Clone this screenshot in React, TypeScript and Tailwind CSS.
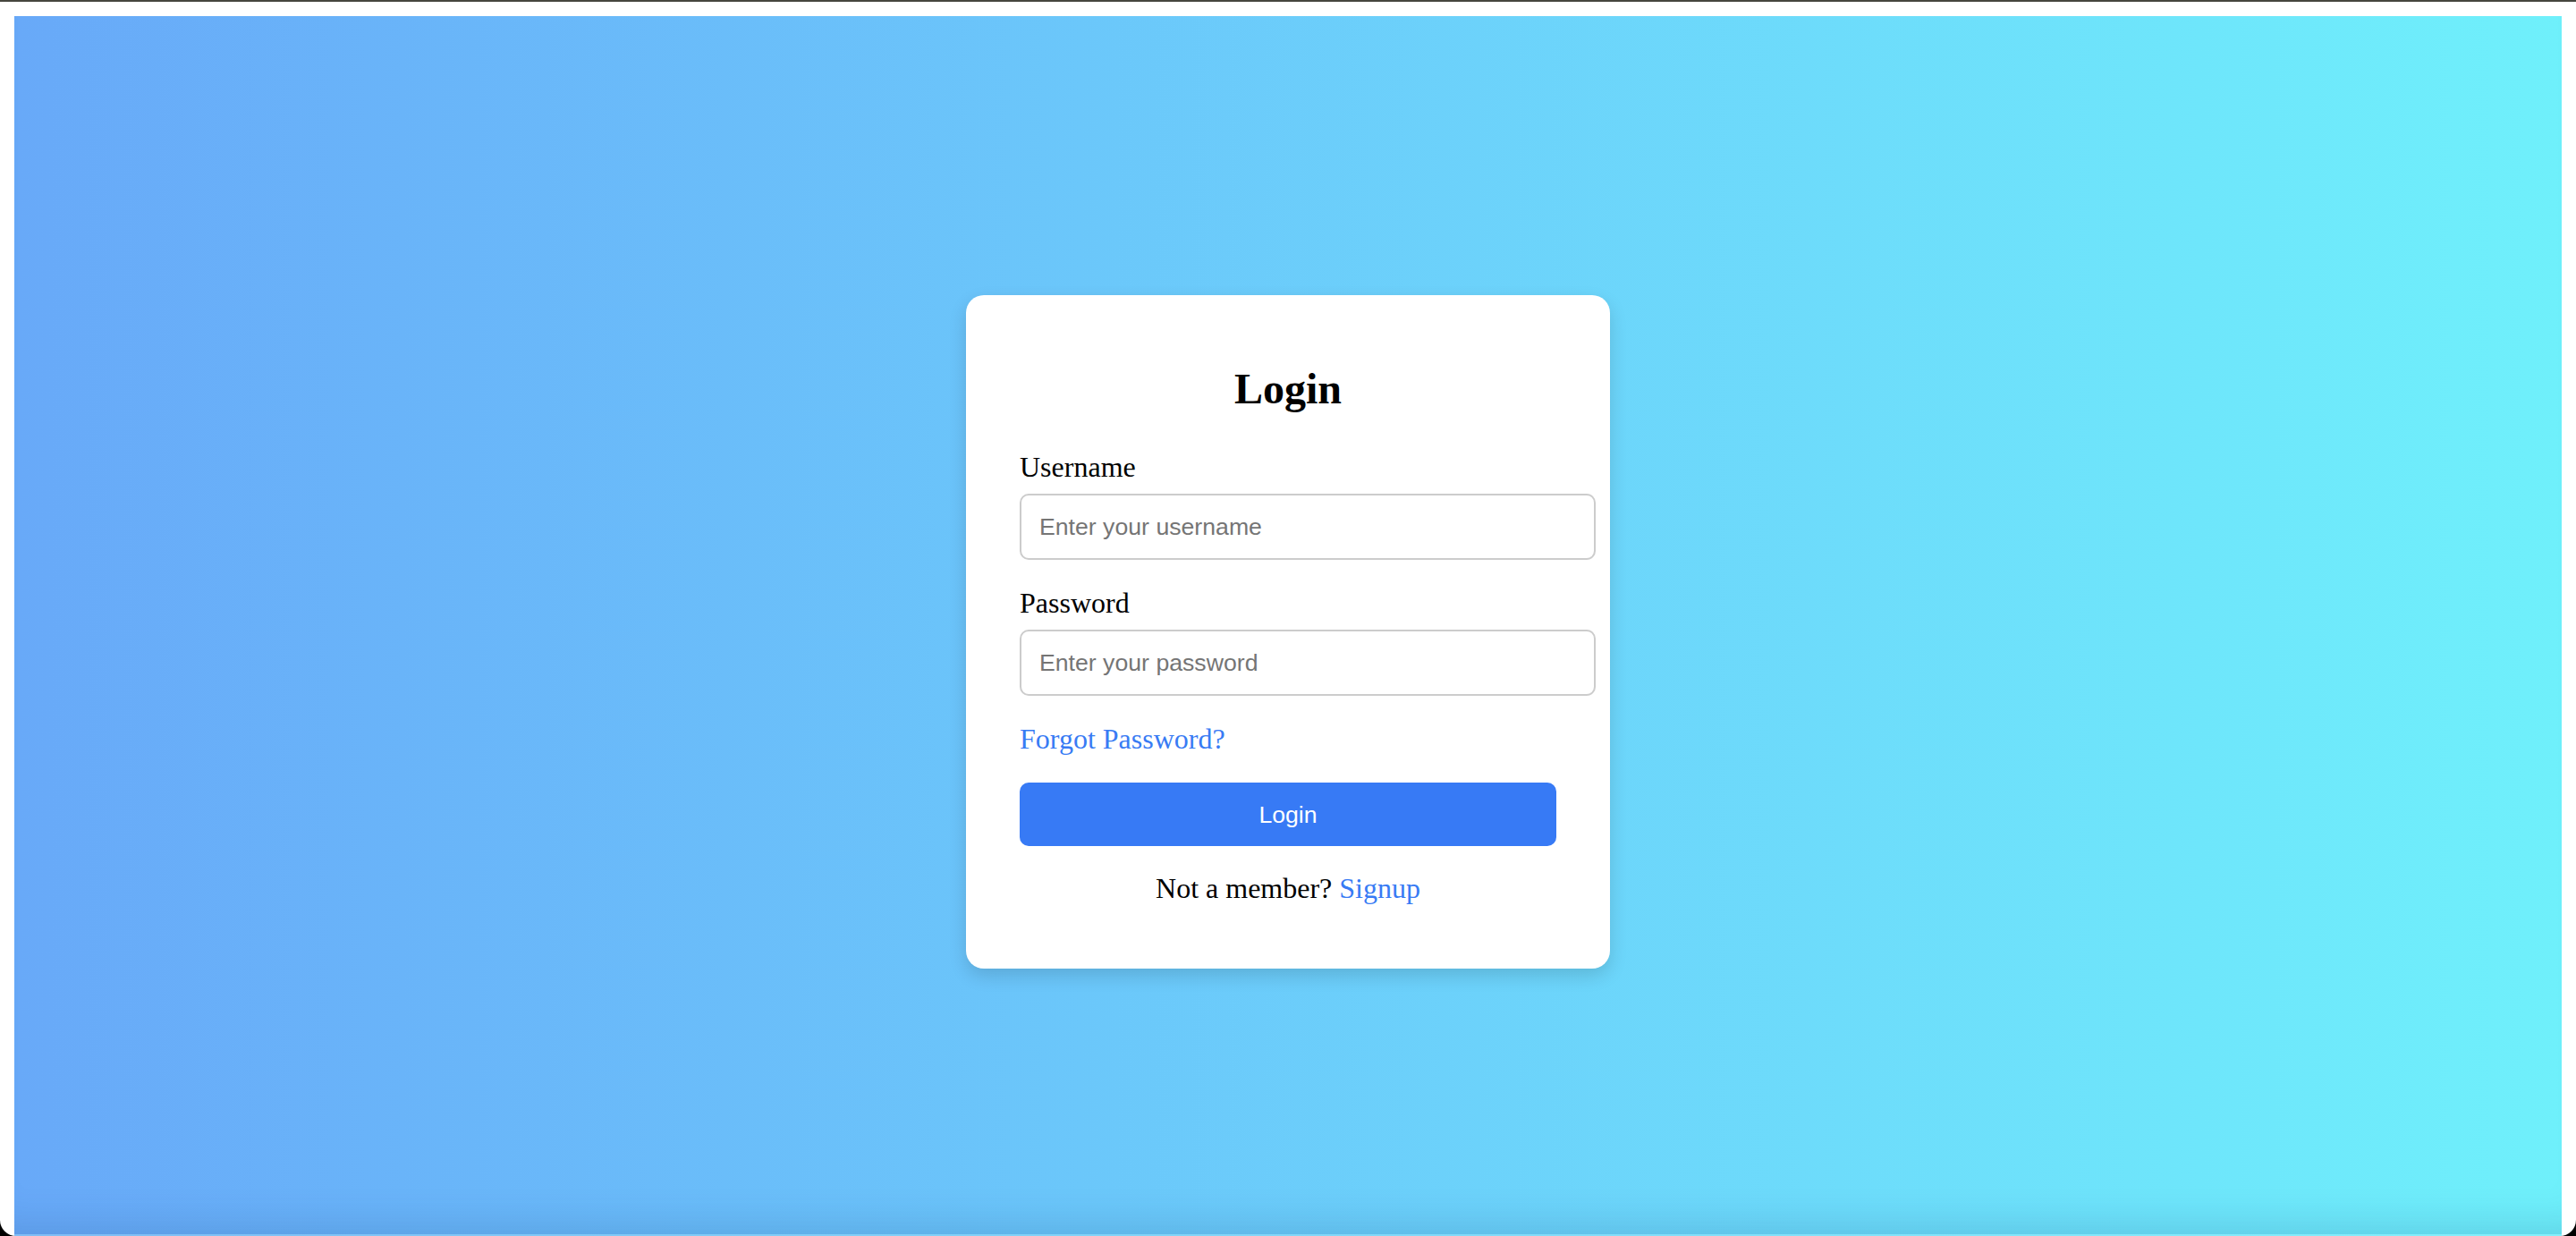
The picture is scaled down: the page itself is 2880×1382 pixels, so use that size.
import React from "react";

const serif = "font-['Liberation_Serif','Times_New_Roman',serif]";
const sans = "font-['Liberation_Sans',Arial,sans-serif]";

function Field({ label, type, placeholder }: { label: string; type: string; placeholder: string }) {
  return (
    <div className="mb-[31px]">
      <label className={`block text-[32px] leading-[35px] text-black mb-[12px] ${serif}`}>{label}</label>
      <input
        type={type}
        placeholder={placeholder}
        className={`block w-[644px] h-[74px] px-[20px] border-2 border-[#cccccc] rounded-[10px] bg-white text-[26.67px] text-black placeholder:text-[#757575] outline-none ${sans}`}
      />
    </div>
  );
}

export default function App() {
  return (
    <div className="w-[2880px] h-[1382px] bg-black overflow-hidden">
      <div className="h-[2px] bg-[#46463f]" />
      <div className="flex flex-col h-[1380px] bg-white rounded-b-[18px] pt-[16px] px-[16px]">
        <main className="flex-1 flex items-start justify-center bg-gradient-to-r from-[#68a9f8] to-[#6ff0fb] pt-[312px] shadow-[inset_0_-46px_40px_-34px_rgba(20,60,120,0.16)]">
          <div className="w-[720px] bg-white rounded-[20px] px-[60px] pt-[60px] pb-[72px] shadow-[0_8px_20px_rgba(0,0,0,0.14)]">
            <h2 className={`mt-[18px] mb-[44px] text-center text-[48px] leading-[53px] font-bold text-black ${serif}`}>Login</h2>
            <form onSubmit={(e) => e.preventDefault()}>
              <Field label="Username" type="text" placeholder="Enter your username" />
              <Field label="Password" type="password" placeholder="Enter your password" />
              <a href="#" className={`block w-fit text-[32px] leading-[35px] text-[#387bf4] mb-[31px] ${serif}`}>
                Forgot Password?
              </a>
              <button
                type="submit"
                className={`w-[600px] h-[71px] rounded-[10px] bg-[#377af5] text-white text-[26.67px] ${sans}`}
              >
                Login
              </button>
            </form>
            <p className={`mt-[30px] text-center text-[32px] leading-[35px] text-black ${serif}`}>
              Not a member? <a href="#" className="text-[#387bf4]">Signup</a>
            </p>
          </div>
        </main>
        <div className="h-[2px] bg-gradient-to-r from-[#80bdf5] to-[#84f0fb]" />
      </div>
    </div>
  );
}
